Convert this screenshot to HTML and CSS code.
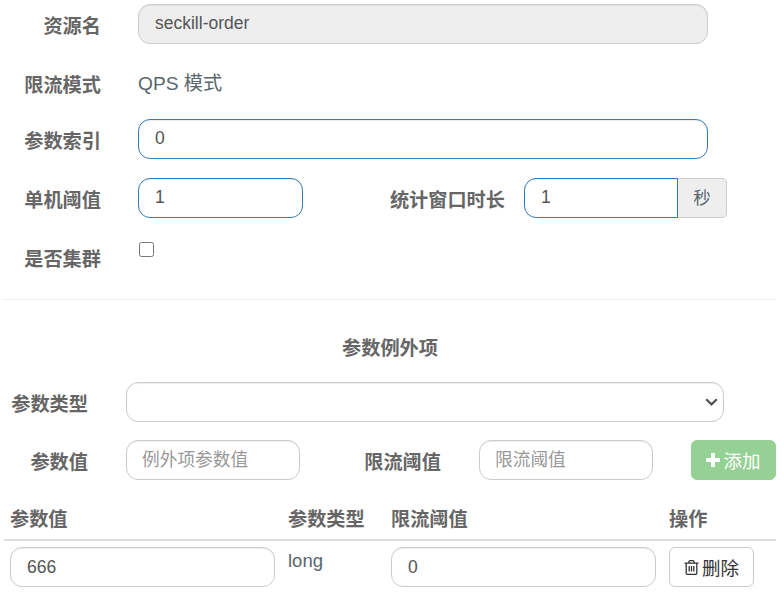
FILE: index.html

```html
<!DOCTYPE html>
<html lang="zh-CN">
<head>
  <meta charset="UTF-8">
  <meta name="viewport" content="width=device-width, initial-scale=1.0">
  <title>热点规则</title>
  <link rel="stylesheet" href="styles.css">
</head>
<body>
  <form class="rule-form">
    <div class="row">
      <label class="label label-main">资源名</label>
      <input class="field field-wide" type="text" value="seckill-order" disabled>
    </div>
    <div class="row row-text">
      <label class="label label-main">限流模式</label>
      <span class="static-text">QPS 模式</span>
    </div>
    <div class="row">
      <label class="label label-main">参数索引</label>
      <input class="field field-wide field-active" type="text" value="0">
    </div>
    <div class="row">
      <label class="label label-main">单机阈值</label>
      <input class="field field-count field-active" type="text" value="1">
      <label class="label label-window">统计窗口时长</label>
      <div class="input-group">
        <input class="field field-window field-active" type="text" value="1">
        <span class="addon">秒</span>
      </div>
    </div>
    <div class="row row-check">
      <label class="label label-main">是否集群</label>
      <input class="check" type="checkbox">
    </div>

    <hr class="divider">

    <h4 class="section-title">参数例外项</h4>

    <div class="row row-type">
      <label class="label label-item">参数类型</label>
      <select class="field field-select"><option></option></select>
    </div>
    <div class="row row-item">
      <label class="label label-item">参数值</label>
      <input class="field field-item" type="text" placeholder="例外项参数值">
      <label class="label label-limit">限流阈值</label>
      <input class="field field-item" type="text" placeholder="限流阈值">
      <button class="btn btn-add" type="button">
        <svg class="icon-plus" viewBox="0 0 14 14"><path d="M5 0h4v5h5v4H9v5H5V9H0V5h5z"/></svg>添加
      </button>
    </div>

    <table class="items">
      <thead>
        <tr>
          <th class="col-value">参数值</th>
          <th class="col-type">参数类型</th>
          <th class="col-limit">限流阈值</th>
          <th>操作</th>
        </tr>
      </thead>
      <tbody>
        <tr>
          <td><input class="field field-cell" type="text" value="666"></td>
          <td class="cell-type">long</td>
          <td><input class="field field-cell" type="text" value="0"></td>
          <td>
            <button class="btn btn-delete" type="button">
              <svg class="icon-trash" viewBox="0 0 15 15"><path d="M5 3V1.6C5 1 5.4.7 6 .7h3c.6 0 1 .3 1 .9V3M.5 3.2h14M2.2 3.2v10c0 .7.4 1.1 1.1 1.1h8.4c.7 0 1.1-.4 1.1-1.1v-10M5.2 6v5.6M7.5 6v5.6M9.8 6v5.6"/></svg>删除
            </button>
          </td>
        </tr>
      </tbody>
    </table>
  </form>
</body>
</html>
```

FILE: styles.css

```css
* { box-sizing: border-box; }

body {
  margin: 0;
  background: #fff;
  color: #58666e;
  font-family: "Liberation Sans", "Noto Sans CJK SC", sans-serif;
  font-size: 17.5px;
  overflow: hidden;
}

.rule-form { padding-top: 4px; }

.row {
  display: flex;
  margin-bottom: 19px;
}

.row-text { height: 37px; }
.row-check { height: 43px; }
.row-type { margin-bottom: 18px; }
.row-item { margin-bottom: 27px; }

.label {
  flex: none;
  height: 40px;
  line-height: 46px;
  font-size: 19.2px;
  font-weight: bold;
  color: #666;
  text-align: right;
}

.label-main { width: 101px; margin-right: 37px; }
.label-window { width: 202px; margin-right: 19px; }
.label-item { width: 88px; margin-right: 38px; }
.label-limit { width: 141px; margin-right: 38px; }

.static-text {
  font-size: 19.2px;
  line-height: 42px;
}

.field {
  display: block;
  height: 40px;
  padding: 0 16px 2px;
  background: #fff;
  border: 1px solid #ccc;
  border-radius: 12px;
  box-shadow: inset 0 1px 1px rgba(0, 0, 0, .075);
  color: #555;
  font: inherit;
  outline: none;
}

.field::placeholder { color: #999; }
.field:disabled { background: #eee; }
.field-active { border-color: #337ab7; }

.field-wide { width: 570px; }
.field-count { width: 165px; }
.field-item { width: 174px; padding: 0 15px; font-size: 17.7px; }
.field-cell { width: 265px; padding-bottom: 0; }

.field-select {
  width: 598px;
  appearance: none;
  background: #fff url("data:image/svg+xml,%3Csvg xmlns='http://www.w3.org/2000/svg' viewBox='0 0 13 8'%3E%3Cpath d='M1.2 1.2 6.5 6.4l5.3-5.2' fill='none' stroke='%23555' stroke-width='2.2'/%3E%3C/svg%3E") no-repeat right 5px center / 13px 8px;
}

.input-group { display: flex; }
.field-window { width: 154px; border-radius: 12px 0 0 12px; }

.addon {
  width: 49px;
  height: 40px;
  background: #eee;
  border: 1px solid #ccc;
  border-left: 0;
  border-radius: 0 5px 5px 0;
  line-height: 38px;
  text-align: center;
}

.check {
  width: 15px;
  height: 15px;
  margin: 5px 0 0 1px;
}

.divider {
  margin: 0 8px 0 4px;
  border: 0;
  border-top: 1px solid #eee;
}

.section-title {
  width: 780px;
  margin: 36px 0 20px;
  line-height: 26px;
  font-size: 19.2px;
  color: #666;
  text-align: center;
}

.btn {
  display: flex;
  align-items: center;
  justify-content: center;
  width: 85px;
  height: 40px;
  padding: 0;
  border-radius: 6px;
  font: inherit;
  font-size: 18.5px;
}

.btn-add {
  margin-left: 38px;
  background: #95d195;
  border: 1px solid #95d195;
  color: #fff;
}

.icon-plus {
  width: 14px;
  height: 14px;
  margin-right: 3px;
  fill: #fff;
}

.btn-delete {
  background: #fff;
  border: 1px solid #ccc;
  color: #333;
}

.icon-trash {
  width: 15px;
  height: 15px;
  margin-right: 3px;
  fill: none;
  stroke: #333;
  stroke-width: 1.3;
}

.items {
  width: 772px;
  margin-left: 4px;
  border-collapse: collapse;
  table-layout: fixed;
}

.items th {
  padding: 0 6px 6px;
  border-bottom: 2px solid #ddd;
  line-height: 26px;
  font-size: 19.2px;
  color: #666;
  text-align: left;
}

.items td {
  padding: 6px 6px 0;
  vertical-align: top;
}

.col-value { width: 278px; }
.col-type { width: 103px; }
.col-limit { width: 278px; }

.cell-type {
  font-size: 18.5px;
  line-height: 28px;
}
```
